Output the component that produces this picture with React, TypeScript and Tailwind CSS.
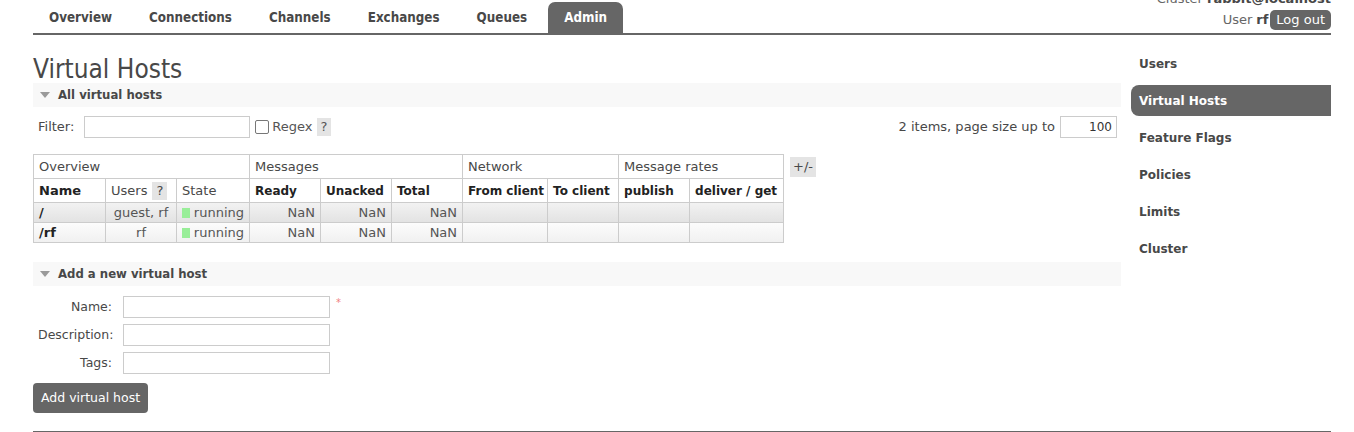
import React from "react";

const tabs = ["Overview", "Connections", "Channels", "Exchanges", "Queues", "Admin"];
const sideLinks = ["Users", "Virtual Hosts", "Feature Flags", "Policies", "Limits", "Cluster"];
const colWidths = [72, 71, 73, 71, 71, 71, 85, 71, 71, 94];

function Triangle() {
  return (
    <svg width="10" height="6" viewBox="0 0 10 6" className="mr-[8px]">
      <polygon points="0,0 10,0 5,6" fill="#9a9a9a" />
    </svg>
  );
}

function SectionBar({ title }: { title: string }) {
  return (
    <div className="h-[24px] bg-[#f8f8f8] flex items-center pl-[7px]">
      <Triangle />
      <span className="font-['DejaVu_Sans_Condensed'] font-bold text-[13px] text-[#484848]">{title}</span>
    </div>
  );
}

const rows = [
  { name: "/", users: "guest, rf", bg: "bg-gradient-to-b from-[#f2f2f2] to-[#e2e2e2]" },
  { name: "/rf", users: "rf", bg: "bg-gradient-to-b from-[#fcfcfc] to-[#f0f0f0]" },
];

export default function App() {
  const cell = "border border-[#cccccc] px-[5px] leading-[16px] whitespace-nowrap";
  return (
    <div className="pl-[33px] pr-[23px] font-['DejaVu_Sans',Verdana,sans-serif] text-[12px] text-[#484848] bg-white overflow-hidden h-[432px]">
      {/* Header */}
      <div className="flex justify-between items-end h-[35px] border-b-[2px] border-[#666666]">
        <div className="flex gap-[5px]">
          {tabs.map((t) => (
            <div
              key={t}
              className={`h-[31px] px-[16px] flex items-center font-['DejaVu_Sans_Condensed'] font-bold text-[13.3px] rounded-t-[7px] ${
                t === "Admin" ? "bg-[#666666] text-white" : "text-[#484848]"
              }`}
            >
              {t}
            </div>
          ))}
        </div>
        <div className="flex flex-col items-end self-start -mt-[9px]">
          <div className="text-[13px] leading-[16px] text-[#666666]">
            Cluster <b className="text-[#484848]">rabbit@localhost</b>
          </div>
          <div className="flex items-center mt-[3px] text-[13px]">
            <span className="text-[#666666]">User</span>
            <b className="ml-[4px] mr-[2px]">rf</b>
            <span className="bg-[#666666] text-white rounded-[5px] px-[6px] h-[20px] flex items-center">
              Log out
            </span>
          </div>
        </div>
      </div>

      <div className="flex">
        {/* Main */}
        <div className="w-[1088px]">
          <h1 className="font-['DejaVu_Sans_Condensed'] text-[26px] leading-[28px] mt-[20px] text-[#484848]">
            Virtual Hosts
          </h1>
          <SectionBar title="All virtual hosts" />

          <div className="flex items-center justify-between mt-[9px] h-[21px] pr-[4px] text-[13px]">
            <div className="flex items-center">
              <span className="ml-[5px] mr-[10px]">Filter:</span>
              <div className="w-[166px] h-[22px] border border-[#cccccc]" />
              <div className="ml-[5px] w-[14px] h-[14px] border-[1.5px] border-[#777777] rounded-[2px]" />
              <span className="ml-[3px] text-[#555555]">Regex</span>
              <span className="ml-[4px] bg-[#e4e4e4] px-[4px] h-[18px] flex items-center text-[#555555]">?</span>
            </div>
            <div className="flex items-center">
              <span>2 items, page size up to</span>
              <div className="ml-[5px] w-[57px] h-[22px] border border-[#cccccc] flex items-center justify-end pr-[4px] text-[12px] text-[#333333]">
                100
              </div>
            </div>
          </div>

          <div className="flex items-start mt-[17px]">
            <table className="border-collapse table-fixed w-[751px] text-[12px]">
              <colgroup>
                {colWidths.map((w, i) => (
                  <col key={i} style={{ width: w }} />
                ))}
              </colgroup>
              <thead>
                <tr className="h-[24px]">
                  <th colSpan={3} className={`${cell} font-normal text-left text-[13px]`}>Overview</th>
                  <th colSpan={3} className={`${cell} font-normal text-left text-[13px]`}>Messages</th>
                  <th colSpan={2} className={`${cell} font-normal text-left text-[13px]`}>Network</th>
                  <th colSpan={2} className={`${cell} font-normal text-left text-[13px]`}>Message rates</th>
                </tr>
                <tr className="h-[24px] text-left">
                  <th className={`${cell} text-[#222222] text-[13px]`}>Name</th>
                  <th className={`${cell} font-normal text-[13px]`}>
                    <span className="flex items-center">
                      Users <span className="ml-[5px] bg-[#e4e4e4] px-[4px] h-[18px] flex items-center">?</span>
                    </span>
                  </th>
                  <th className={`${cell} font-normal text-[13px]`}>State</th>
                  <th className={`${cell} text-[#222222]`}>Ready</th>
                  <th className={`${cell} text-[#222222]`}>Unacked</th>
                  <th className={`${cell} text-[#222222]`}>Total</th>
                  <th className={`${cell} text-[#222222]`}>From client</th>
                  <th className={`${cell} text-[#222222]`}>To client</th>
                  <th className={`${cell} text-[#222222]`}>publish</th>
                  <th className={`${cell} text-[#222222]`}>deliver / get</th>
                </tr>
              </thead>
              <tbody className="text-[13px]">
                {rows.map((r) => (
                  <tr key={r.name} className={`h-[20px] ${r.bg}`}>
                    <td className={`${cell} font-bold text-[#222222]`}>{r.name}</td>
                    <td className={`${cell} text-center text-[#555555]`}>{r.users}</td>
                    <td className={`${cell} text-[#555555]`}>
                      <span className="flex items-center">
                        <span className="w-[10px] h-[10px] bg-[#99ee99] mr-[4px]" />
                        running
                      </span>
                    </td>
                    <td className={`${cell} text-right text-[#555555]`}>NaN</td>
                    <td className={`${cell} text-right text-[#555555]`}>NaN</td>
                    <td className={`${cell} text-right text-[#555555]`}>NaN</td>
                    <td className={cell}></td>
                    <td className={cell}></td>
                    <td className={cell}></td>
                    <td className={cell}></td>
                  </tr>
                ))}
              </tbody>
            </table>
            <span className="ml-[6px] mt-[3px] bg-[#e4e4e4] w-[26px] h-[20px] flex items-center justify-center text-[13px]">
              +/-
            </span>
          </div>

          <div className="mt-[19px]">
            <SectionBar title="Add a new virtual host" />
          </div>

          <div className="mt-[10px] flex flex-col gap-[6px] text-[12.5px]">
            {["Name:", "Description:", "Tags:"].map((l, i) => (
              <div key={l} className="flex items-center h-[22px]">
                <span className="w-[79px] pl-[5px] text-right">{l}</span>
                <div className="ml-[11px] w-[207px] h-[22px] border border-[#cccccc]" />
                {i === 0 && <span className="ml-[6px] -mt-[10px] text-[#f08080] text-[10px]">*</span>}
              </div>
            ))}
          </div>

          <button className="mt-[9px] h-[30px] px-[8px] bg-[#666666] text-white rounded-[4px] text-[12.5px]">
            Add virtual host
          </button>
        </div>

        {/* Sidebar */}
        <div className="ml-[10px] w-[200px] pt-[13px] flex flex-col gap-[6px]">
          {sideLinks.map((s) => (
            <div
              key={s}
              className={`h-[31px] flex items-center pl-[8px] font-bold text-[12px] ${
                s === "Virtual Hosts" ? "bg-[#666666] text-white rounded-l-[8px]" : "text-[#484848]"
              }`}
            >
              {s}
            </div>
          ))}
        </div>
      </div>

      <div className="mt-[18px] border-t-[2px] border-[#666666]" />
    </div>
  );
}
